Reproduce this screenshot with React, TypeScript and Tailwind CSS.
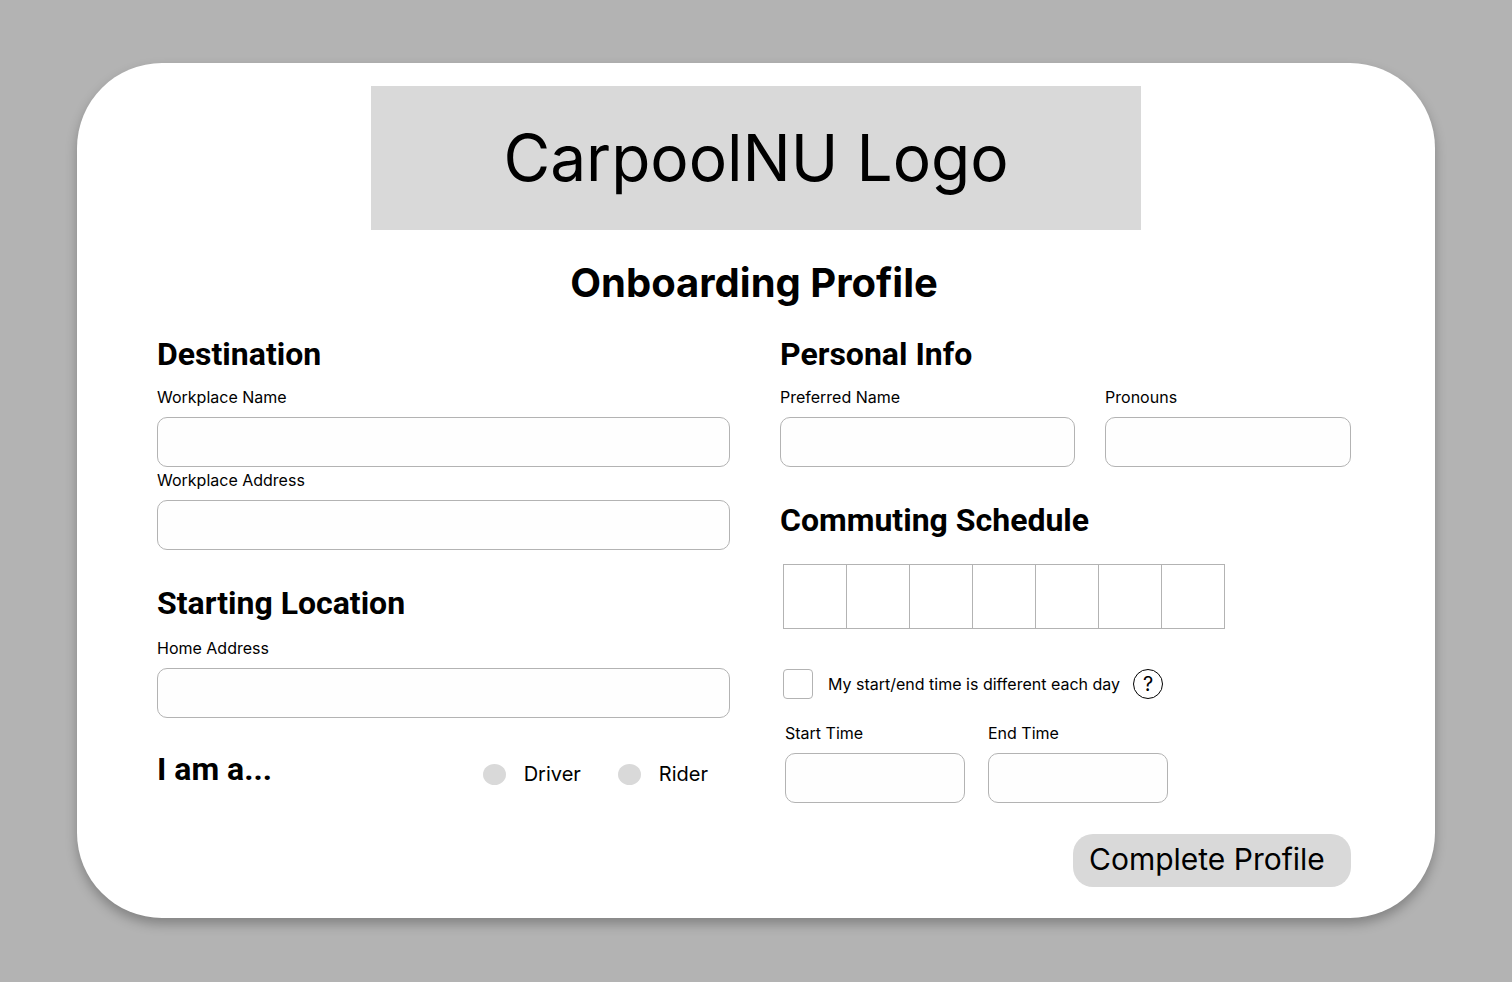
import { useState } from "react";
import type { ReactNode } from "react";

const DAYS = [
  "Sunday",
  "Monday",
  "Tuesday",
  "Wednesday",
  "Thursday",
  "Friday",
  "Saturday",
];

function SectionTitle({ children }: { children: ReactNode }) {
  return (
    <h2 className="font-[Roboto,sans-serif] text-[32px] leading-10 font-bold">
      {children}
    </h2>
  );
}

function Field({
  id,
  label,
  className = "",
}: {
  id: string;
  label: string;
  className?: string;
}) {
  return (
    <div className={className}>
      <label htmlFor={id} className="block text-base leading-5">
        {label}
      </label>
      <input
        id={id}
        type="text"
        className="mt-2.5 block h-[50px] w-full rounded-[10px] border border-[#b3b3b3] bg-[#fefefe] px-3"
      />
    </div>
  );
}

function RoleOption({ value, label }: { value: string; label: string }) {
  return (
    <label className="flex items-center gap-[18px] text-xl leading-[30px]">
      <input
        type="radio"
        name="role"
        value={value}
        className="h-[21px] w-[23px] appearance-none rounded-[50%] bg-[#d9d9d9] checked:bg-black"
      />
      {label}
    </label>
  );
}

function DayPicker() {
  const [selected, setSelected] = useState<string[]>([]);

  const toggle = (day: string) => {
    setSelected((prev) =>
      prev.includes(day) ? prev.filter((d) => d !== day) : [...prev, day],
    );
  };

  return (
    <div className="flex pl-px">
      {DAYS.map((day) => (
        <button
          key={day}
          type="button"
          aria-label={day}
          aria-pressed={selected.includes(day)}
          onClick={() => toggle(day)}
          className="-ml-px h-[65px] w-16 border border-[#b3b3b3] bg-white aria-pressed:bg-[#d9d9d9]"
        />
      ))}
    </div>
  );
}

export default function App() {
  return (
    <div className="min-h-screen bg-[#b3b3b3] px-[77px] pt-[63px] pb-16 font-[Inter,sans-serif] text-black">
      <main className="rounded-[85px] bg-white pt-[23px] pb-[31px] shadow-[0_6px_12px_rgba(0,0,0,0.27)]">
        <div className="mx-auto flex h-36 w-[770px] max-w-full items-center justify-center bg-[#d9d9d9] text-[64px] leading-[80px]">
          CarpoolNU Logo
        </div>

        <form
          className="pr-[84px] pl-20"
          onSubmit={(e) => e.preventDefault()}
        >
          <h1 className="mt-[29px] text-center text-[40px] leading-[48px] font-bold">
            Onboarding Profile
          </h1>

          <div className="mt-[27px] grid grid-cols-[573fr_571fr] gap-[50px]">
            <div>
              <section>
                <SectionTitle>Destination</SectionTitle>
                <Field id="workplace-name" label="Workplace Name" className="mt-[13px]" />
                <Field id="workplace-address" label="Workplace Address" className="mt-[3px]" />
              </section>

              <section className="mt-[33px]">
                <SectionTitle>Starting Location</SectionTitle>
                <Field id="home-address" label="Home Address" className="mt-[15px]" />
              </section>

              <section className="mt-[31px] flex items-end justify-between pr-[22px]">
                <SectionTitle>I am a...</SectionTitle>
                <div className="flex gap-[37px]">
                  <RoleOption value="driver" label="Driver" />
                  <RoleOption value="rider" label="Rider" />
                </div>
              </section>
            </div>

            <div>
              <section>
                <SectionTitle>Personal Info</SectionTitle>
                <div className="mt-[13px] flex gap-[30px]">
                  <Field id="preferred-name" label="Preferred Name" className="flex-6" />
                  <Field id="pronouns" label="Pronouns" className="flex-5" />
                </div>
              </section>

              <section className="mt-[33px]">
                <SectionTitle>Commuting Schedule</SectionTitle>
                <div className="mt-6 pl-[3px]">
                  <DayPicker />

                  <div className="mt-10 flex items-center">
                    <input
                      id="varies"
                      type="checkbox"
                      className="size-[30px] appearance-none rounded-sm border border-[#b3b3b3] bg-white checked:bg-[#d9d9d9]"
                    />
                    <label htmlFor="varies" className="ml-[15px] text-base leading-5">
                      My start/end time is different each day
                    </label>
                    <button
                      type="button"
                      aria-label="Help"
                      className="ml-[13px] flex size-[30px] items-center justify-center rounded-full border border-black text-xl leading-5"
                    >
                      ?
                    </button>
                  </div>

                  <div className="mt-6 flex gap-[23px] pl-0.5">
                    <Field id="start-time" label="Start Time" className="w-[180px]" />
                    <Field id="end-time" label="End Time" className="w-[180px]" />
                  </div>
                </div>
              </section>
            </div>
          </div>

          <div className="mt-[31px] flex justify-end">
            <button
              type="submit"
              className="h-[53px] w-[278px] rounded-[20px] bg-[#d9d9d9] pr-6 pb-1 pl-4 text-left text-[30px] leading-9 whitespace-nowrap"
            >
              Complete Profile
            </button>
          </div>
        </form>
      </main>
    </div>
  );
}
